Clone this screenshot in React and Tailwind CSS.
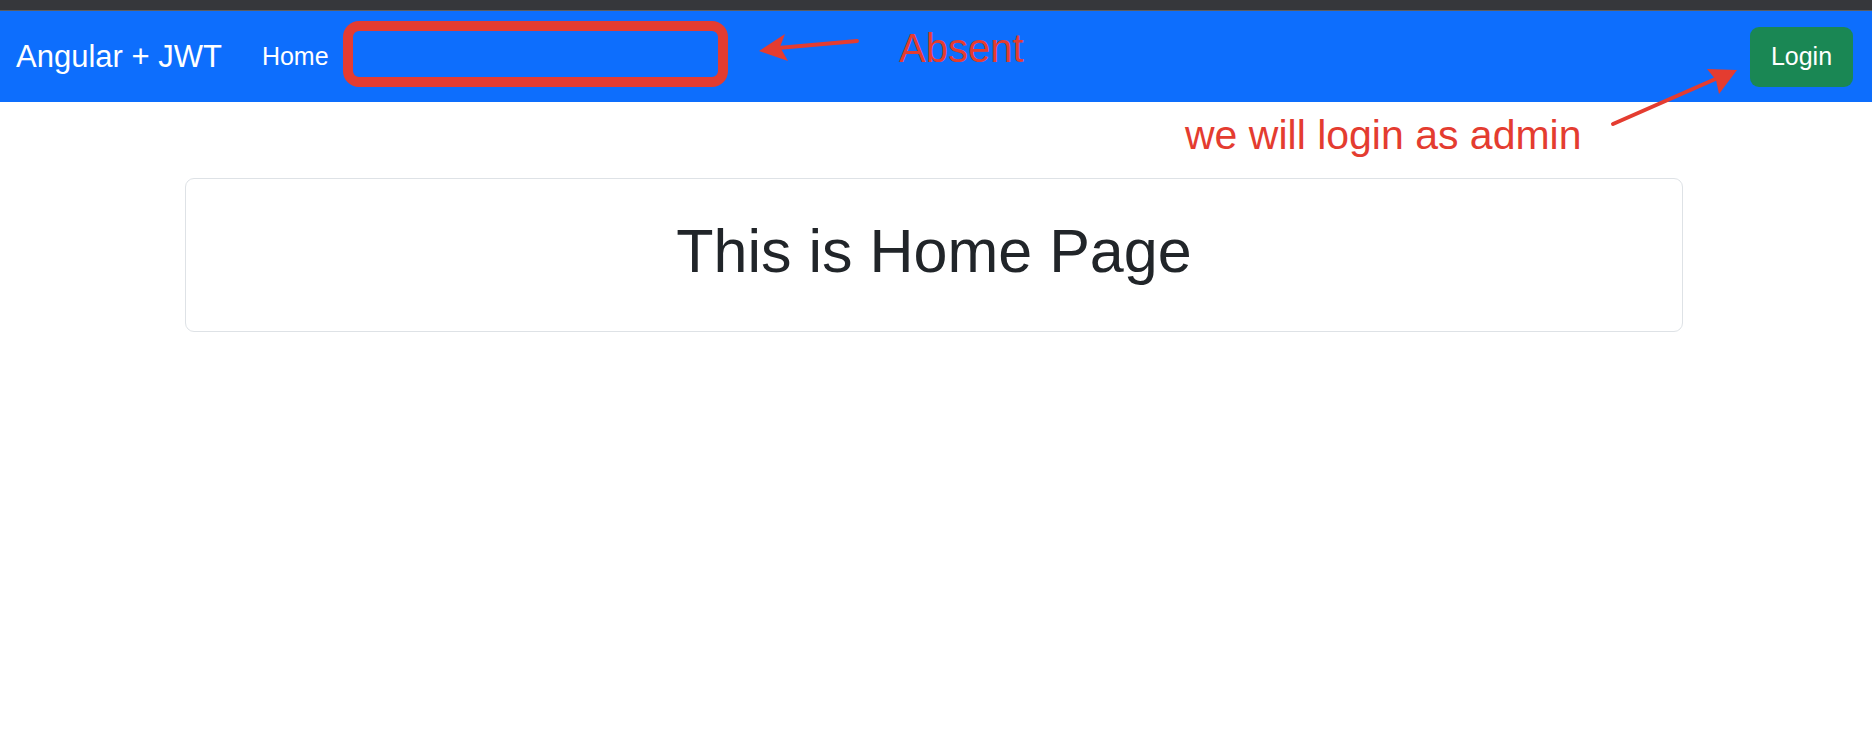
import React from 'react';

const Navbar = () => (
  <nav className="flex h-[91px] items-center justify-between bg-[#0d6efd] pl-[16px] pr-[19px]">
    <div className="flex items-center">
      <a className="text-[31px] leading-none text-white">Angular + JWT</a>
      <a className="ml-[40px] text-[25px] leading-none text-white">Home</a>
    </div>
    <button className="flex h-[60px] w-[103px] items-center justify-center rounded-[9px] bg-[#1a8754] text-[25px] leading-none text-white">
      Login
    </button>
  </nav>
);

const Annotations = () => (
  <>
    <div className="pointer-events-none absolute left-[343px] top-[21px] h-[66px] w-[385px] rounded-[16px] border-[10px] border-[#e43c30]" />
    <span className="pointer-events-none absolute left-[899px] top-[28px] text-[40px] leading-[40px] text-[#e43c30]">
      Absent
    </span>
    <span className="pointer-events-none absolute left-[1185px] top-[115px] text-[41px] leading-[41px] text-[#e43c30]">
      we will login as admin
    </span>
    <svg className="pointer-events-none absolute left-0 top-0" width="1872" height="736">
      <line x1="857" y1="41" x2="778" y2="48" stroke="#e43c30" strokeWidth="4" strokeLinecap="round" />
      <polygon points="759,51 785,34 780,47 788,61" fill="#e43c30" />
      <line x1="1613" y1="124" x2="1720" y2="77" stroke="#e43c30" strokeWidth="4" strokeLinecap="round" />
      <polygon points="1737,70 1707,69 1716,80 1719,94" fill="#e43c30" />
    </svg>
  </>
);

export default function App() {
  return (
    <div className="relative min-h-[736px] bg-white font-['Liberation_Sans',Arial,sans-serif]">
      <div className="h-[10px] bg-[#36373b]" />
      <div className="h-[1px] bg-[#5c5c5e]" />
      <Navbar />
      <main className="pt-[76px] pl-[185px]">
        <div className="box-border h-[154px] w-[1498px] rounded-[9px] border border-[#dee2e6] pt-[36px]">
          <h1 className="text-center text-[61px] leading-[72px] text-[#212529]">This is Home Page</h1>
        </div>
      </main>
      <Annotations />
    </div>
  );
}
